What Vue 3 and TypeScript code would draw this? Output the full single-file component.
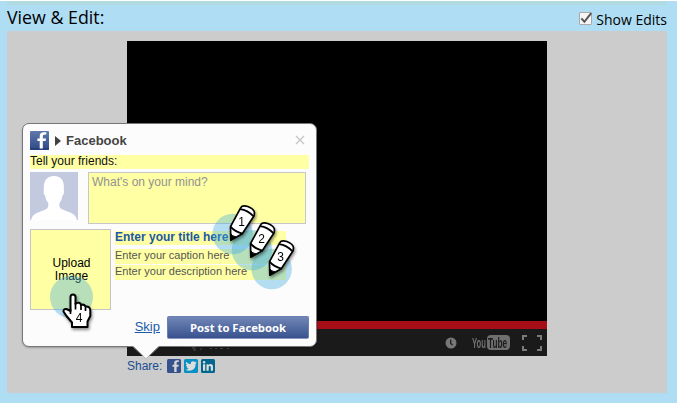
<script setup lang="ts">
interface Pencil {
  n: number
  x: number
  y: number
  cx: number
  cy: number
}

const pencils: Pencil[] = [
  { n: 1, x: 230.8, y: 240.2, cx: 232.7, cy: 234 },
  { n: 2, x: 250.8, y: 257.2, cx: 252, cy: 250.2 },
  { n: 3, x: 269.8, y: 275.2, cx: 271.7, cy: 269 },
]
</script>

<template>
  <div class="page">
    <div class="strip"></div>
    <header class="head">
      <h1>View &amp; Edit:</h1>
      <label class="toggle">
        <span class="box">
          <svg width="13" height="13" viewBox="0 0 13 13"><path d="M1.400 5.300 4.400 8.800 11.200 .2" fill="none" stroke="#555" stroke-width="2" /></svg>
        </span>
        <span class="toggle-text">Show Edits</span>
      </label>
    </header>

    <main class="panel">
      <div class="video">
        <div class="progress"></div>
        <div class="controls">
          <svg class="volume" width="52" height="20" viewBox="0 0 52 20">
            <path d="M1 14.500H4V18ZM9 17l2-2M19 15.500h2M24 15.500h2M29 15.500h3M36 15.500h2" fill="none" stroke="#484848" />
          </svg>
          <svg class="clock" width="12" height="12" viewBox="0 0 12 12">
            <circle cx="6" cy="6" r="5.5" fill="#777" />
            <path d="M5.7 2.5V6.4L7.6 8" fill="none" stroke="#1b1b1b" stroke-width="1.2" />
          </svg>
          <div class="youtube"><span class="you">You</span><span class="tube"><span>Tube</span></span></div>
          <svg class="full" width="20" height="16" viewBox="0 0 20 16">
            <path d="M1 5V1H5M15 1H19V5M19 11V15H15M5 15H1V11" fill="none" stroke="#7b7b7b" stroke-width="2" />
          </svg>
        </div>
      </div>
      <div class="share">
        <span class="share-label">Share:</span>
        <svg width="14" height="14" viewBox="0 0 14 14">
          <rect width="14" height="14" rx="1.5" fill="#36528c" />
          <path d="M11.8 3.1H10.6Q9.6 3.1 9.6 4.2V5.7H11.7L11.4 7.7H9.6V13H7.2V7.7H5.5V5.7H7.2V4Q7.2 1.3 10 1.3H11.8Z" fill="#d5d5d5" />
        </svg>
        <svg width="14" height="14" viewBox="0 0 14 14">
          <rect width="14" height="14" rx="1.5" fill="#0790c4" />
          <path d="M2 2.8Q4 5.1 6.8 5.2 6.5 2.4 9 2.2 10.1 2.2 10.8 3L12.4 2.4 11.6 3.8 12.8 3.6 11.7 4.8Q11.5 11.6 5.2 11.8 3 11.8 1.4 10.7 3.5 10.8 4.7 9.8 3 9.5 2.6 8.2H3.7Q2 7.5 1.9 5.8L3 6.1Q1.2 4.6 2 2.8Z" fill="#ddd" />
        </svg>
        <svg width="14" height="14" viewBox="0 0 14 14">
          <rect width="14" height="14" rx="1.5" fill="#00688f" />
          <path d="M2 5.3H4.2V11.7H2ZM5.5 5.3H7.5V6.2Q8.2 5.1 9.6 5.1 12 5.1 12 7.9V11.7H9.8V8.3Q9.8 6.9 8.8 6.9 7.7 6.9 7.7 8.3V11.7H5.5Z" fill="#ddd" />
          <circle cx="3.1" cy="3.3" r="1.2" fill="#ddd" />
        </svg>
      </div>
    </main>

    <section class="popup">
      <div class="title">
        <svg width="19" height="19" viewBox="0 0 19 19">
          <defs>
            <linearGradient id="fb" x2="0" y2="1"><stop stop-color="#6078ac" /><stop offset="1" stop-color="#2e4987" /></linearGradient>
          </defs>
          <rect width="19" height="19" rx="1" fill="url(#fb)" />
          <path d="M0 17H19V18.5H0Z" fill="#263d75" />
          <path d="M16.300 3.500H14.700Q12.800 3.500 12.800 5.500V7.400H16L15.600 10H12.800V17.500H9.700V10H7.400V7.400H9.700V5.200Q9.700 1.200 13.800 1.200H16.300Z" fill="#fff" />
        </svg>
        <svg class="caret" width="6" height="10" viewBox="0 0 6 10"><path d="M0 0 6 5 0 10Z" fill="#404040" /></svg>
        <strong>Facebook</strong>
        <svg class="close" width="10" height="10" viewBox="0 0 10 10"><path d="M1 1 9 9M9 1 1 9" stroke="#c6c6c6" stroke-width="1.3" /></svg>
      </div>
      <div class="message">Tell your friends:</div>
      <div class="compose">
        <svg width="48" height="48" viewBox="0 0 48 48">
          <rect width="48" height="48" fill="#c3c9df" />
          <path d="M1 48Q2 42.500 8 40.500L16 37.200Q19 35.500 18.200 31Q15.500 28 15 23.500Q13 22 13.800 18Q13 4 24 4Q35 4 33.800 18Q34.600 22 32.500 23.500Q32 28 29.500 31Q28.500 35.500 32 37.200L40 40.500Q46 42.500 47 48Z" fill="#fff" />
        </svg>
        <div class="mind">What's on your mind?</div>
      </div>
      <div class="details">
        <div class="upload">Upload<br />Image</div>
        <div class="lines">
          <div class="line heading">Enter your title here</div>
          <div class="line caption">Enter your caption here</div>
          <div class="line desc">Enter your description here</div>
        </div>
      </div>
      <div class="actions">
        <a class="skip">Skip</a>
        <button type="button">Post to Facebook</button>
      </div>
      <svg class="arrow" width="28" height="14" viewBox="0 0 28 14">
        <path d="M1 0 14 12.500 27 0Z" fill="#fcfcfc" />
        <path d="M1 .8 14 12.800 27 .8" fill="none" stroke="#aaa" stroke-width=".7" />
      </svg>
    </section>

    <svg class="marks" width="678" height="403" viewBox="0 0 678 403">
      <circle v-for="p in pencils" :key="'c' + p.n" :cx="p.cx" :cy="p.cy" r="20.200" class="halo" />
      <circle cx="71.500" cy="297" r="21.500" class="halo" />
      <g v-for="p in pencils" :key="p.n" :transform="`translate(${p.x} ${p.y})`" class="tool">
        <path d="M0 0 -.300-13.500L10-32.500Q11.500-35.500 17-33.700 23.500-31 23.700-27.500L23.300-24.500 11.500-6.500Z" fill="#fff" stroke="#000" stroke-width="1.700" stroke-linejoin="round" />
        <path d="M-.300-13.500Q4-8.500 11.500-6.500M9.200-31Q17-30 22.500-24" fill="none" stroke="#000" stroke-width="1.800" />
        <path d="M0 0-.200-6.500Q1.500-4 5.200-3.300Z" stroke="#000" />
        <text x="10.700" y="-14.500">{{ p.n }}</text>
      </g>
      <g class="tool">
        <path d="M70.500 311V297Q70.500 294.500 73 294.500T75.500 297V304Q76.500 302.300 79 302.800 80.700 303.200 81 305 84.500 303.800 85.500 306.500 90 306 90.300 310.500V316L87.500 321.500V327H72V322.500L66.500 316 63.500 311.500Q63.300 308.600 66.500 309Z" fill="#fff" stroke="#000" stroke-width="2" stroke-linejoin="round" />
        <path d="M75.500 303V309.500M81 304V310M85.500 306V311M70.500 309V314" fill="none" stroke="#000" stroke-width="1.700" />
        <text x="79.200" y="322">4</text>
      </g>
    </svg>
  </div>
</template>

<style>
body {
  margin: 0;
  overflow: hidden;
}
</style>

<style scoped>
.page {
  position: relative;
  box-sizing: border-box;
  width: 678px;
  height: 403px;
  padding: 0 11px 0 7px;
  border-top: 1px solid #fff;
  border-right: 1px solid #fff;
  background: #afddf4;
  font-family: "Liberation Sans", Arial, sans-serif;
}
.strip {
  height: 4px;
  width: 660px;
  background: #b0dbe0;
}
.head {
  display: flex;
  justify-content: space-between;
  width: 660px;
  height: 26px;
}
h1 {
  margin: 0;
  font: 17.800px/25px "Open Sans", sans-serif;
}
.toggle {
  display: flex;
  gap: 4px;
  padding-top: 7px;
}
.box {
  width: 11px;
  height: 11px;
  border: 1px solid #aaa;
  border-radius: 1px;
  background: #f5f5f5;
}
.box svg {
  display: block;
  overflow: visible;
}
.toggle-text {
  font: 14px/16px "Open Sans", sans-serif;
}
.panel {
  width: 660px;
  height: 362px;
  box-sizing: border-box;
  padding: 10px 120px 0;
  background: #ccc;
}
.video {
  width: 420px;
  height: 315px;
  display: flex;
  flex-direction: column;
  justify-content: flex-end;
  background: #000;
}
.progress {
  height: 8px;
  background: #a50d17;
}
.controls {
  height: 27px;
  display: flex;
  align-items: center;
  box-sizing: border-box;
  padding-right: 5px;
  background: #1a1a1a;
}
.volume {
  margin: 0 auto 0 64px;
}
.youtube {
  display: flex;
  align-items: center;
  margin: 0 12px 0 15px;
  color: #707070;
  font: bold 15px/15px "Liberation Sans", sans-serif;
}
.you {
  width: 15px;
  transform: scaleX(0.51);
  transform-origin: left;
}
.tube {
  width: 23px;
  height: 15px;
  border-radius: 4px;
  background: #6f6f6f;
  color: #1c1c1c;
}
.tube span {
  display: block;
  width: 36px;
  padding-left: 2px;
  transform: scaleX(0.55);
  transform-origin: left;
}
.share {
  display: flex;
  gap: 3px;
  padding-top: 3px;
}
.share-label {
  width: 37px;
  color: #194d91;
  font-size: 12px;
  line-height: 14px;
}
.popup {
  position: absolute;
  left: 22px;
  top: 122px;
  width: 295px;
  height: 224px;
  box-sizing: border-box;
  padding: 7px;
  border: 1px solid #777;
  border-radius: 7px;
  background: #fcfcfc;
  box-shadow: 0 1px 2px rgba(0, 0, 0, 0.25);
}
.title {
  display: flex;
  align-items: center;
  height: 19px;
  color: #444;
  font-size: 13px;
}
.caret {
  margin: 0 5px 0 6px;
}
.close {
  margin-left: auto;
  margin-right: 4px;
  margin-bottom: 1px;
}
.message {
  height: 14px;
  margin-top: 5px;
  background: #ffffa3;
  color: #111;
  font-size: 12px;
  line-height: 13px;
}
.compose {
  display: flex;
  gap: 10px;
  margin-top: 3px;
}
.mind {
  box-sizing: border-box;
  width: 218px;
  height: 52px;
  padding: 2px 3px;
  border: 1px solid #c7c7c7;
  background: #ffffa3;
  color: #929292;
  font-size: 12px;
  line-height: 14px;
}
.details {
  display: flex;
  gap: 4px;
  margin-top: 5px;
}
.upload {
  box-sizing: border-box;
  width: 81px;
  height: 81px;
  padding: 27px 0 0 2px;
  border: 1px solid #c5c5c5;
  background: #ffffa3;
  text-align: center;
  font-size: 12px;
  line-height: 13px;
}
.lines {
  width: 171px;
  padding-top: 2px;
}
.line {
  height: 15px;
  margin-bottom: 1px;
  background: #ffffa3;
  color: #555;
  font-size: 11px;
  line-height: 13px;
}
.line.heading {
  height: 14px;
  margin-bottom: 4px;
  color: #1a58a5;
  font-size: 12px;
  font-weight: bold;
}
.actions {
  display: flex;
  justify-content: flex-end;
  gap: 7px;
  margin-top: 6px;
}
.skip {
  color: #1a5bab;
  font-size: 13px;
  line-height: 22px;
  text-decoration: underline;
}
button {
  width: 142px;
  height: 23px;
  padding: 0 0 1px;
  border: 1px solid #6b80b0;
  border-bottom-color: #8997bb;
  border-radius: 2px;
  background: linear-gradient(#7186b6, #39528f);
  color: #fff;
  font: bold 11.300px/19px "Open Sans", sans-serif;
}
.arrow {
  position: absolute;
  left: 109px;
  top: 222px;
}
.marks {
  position: absolute;
  left: 0;
  top: -1px;
}
.halo {
  fill: rgba(64, 170, 224, 0.38);
}
.tool {
  filter: drop-shadow(1.500px 2px 1.500px rgba(0, 0, 0, 0.45));
}
.tool text {
  font: 12px "Liberation Sans", sans-serif;
  text-anchor: middle;
}
</style>
